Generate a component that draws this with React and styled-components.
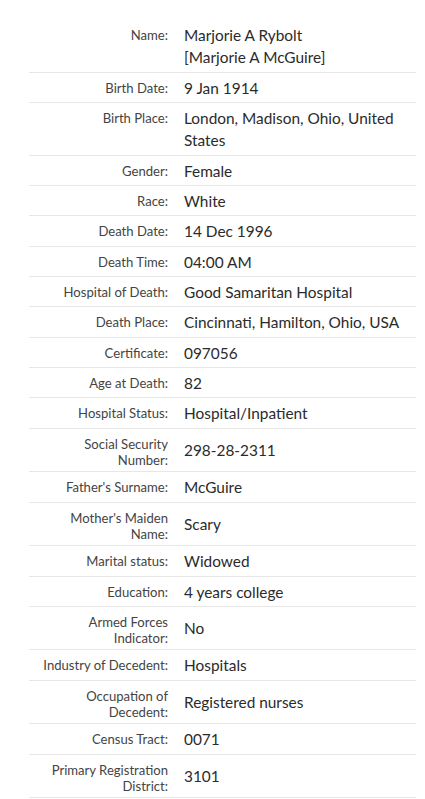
import React from "react";
import styled, { createGlobalStyle } from "styled-components";

const Global = createGlobalStyle`
  html, body { margin: 0; padding: 0; background: #fff; }
  body { font-family: Lato, "Noto Sans", sans-serif; }
`;

const Page = styled.div`
  padding: 20px 9px 0 29px;
`;

const Table = styled.div`
  display: flex;
  flex-direction: column;
`;

const Row = styled.div`
  display: grid;
  grid-template-columns: 139px 1fr;
  column-gap: 16px;
  align-items: center;
  padding: 4px 0 3px;
  border-bottom: 1px solid #e7e7e7;
`;

const Label = styled.div`
  align-self: start;
  padding: 3px 0 0 6px;
  text-align: right;
  font-size: 13.1px;
  line-height: 16.25px;
  color: #444;
`;

const Value = styled.div`
  font-size: 15.4px;
  line-height: 22.35px;
  color: #2b2b2b;
  padding-right: 6px;
`;

const records = [
  ["Name:", ["Marjorie A Rybolt", "[Marjorie A McGuire]"]],
  ["Birth Date:", "9 Jan 1914"],
  ["Birth Place:", "London, Madison, Ohio, United States"],
  ["Gender:", "Female"],
  ["Race:", "White"],
  ["Death Date:", "14 Dec 1996"],
  ["Death Time:", "04:00 AM"],
  ["Hospital of Death:", "Good Samaritan Hospital"],
  ["Death Place:", "Cincinnati, Hamilton, Ohio, USA"],
  ["Certificate:", "097056"],
  ["Age at Death:", "82"],
  ["Hospital Status:", "Hospital/Inpatient"],
  ["Social Security Number:", "298-28-2311"],
  ["Father's Surname:", "McGuire"],
  ["Mother's Maiden Name:", "Scary"],
  ["Marital status:", "Widowed"],
  ["Education:", "4 years college"],
  ["Armed Forces Indicator:", "No"],
  ["Industry of Decedent:", "Hospitals"],
  ["Occupation of Decedent:", "Registered nurses"],
  ["Census Tract:", "0071"],
  ["Primary Registration District:", "3101"],
];

export default function App() {
  return (
    <>
      <Global />
      <Page>
        <Table>
          {records.map(([label, value]) => (
            <Row key={label}>
              <Label>{label}</Label>
              <Value>
                {Array.isArray(value)
                  ? value.map((v, i) => <div key={i}>{v}</div>)
                  : value}
              </Value>
            </Row>
          ))}
        </Table>
      </Page>
    </>
  );
}
